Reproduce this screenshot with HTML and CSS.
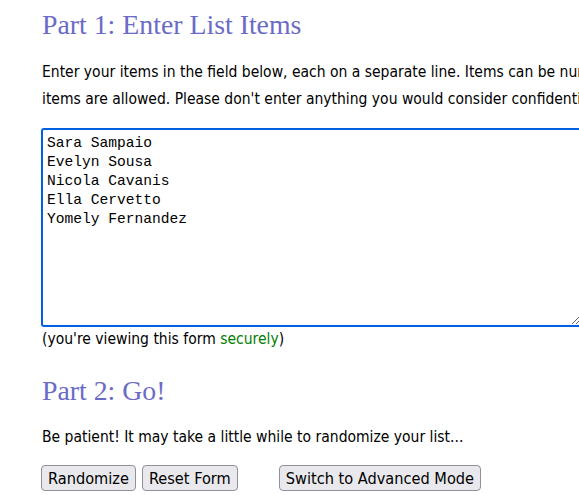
FILE: index.html
```html
<!DOCTYPE html>
<html>
<head>
<meta charset="utf-8">
<link rel="stylesheet" href="styles.css">
</head>
<body>
<div class="page">
  <h2 class="part-title">Part 1: Enter List Items</h2>
  <p class="intro"><span class="line">Enter your items in the field below, each on a separate line. Items can be numbers, names, email addresses, etc. A maximum of 10,000</span><span class="line">items are allowed. Please don't enter anything you would consider confidential.</span></p>
  <textarea class="items" spellcheck="true">Sara Sampaio
Evelyn Sousa
Nicola Cavanis
Ella Cervetto
Yomely Fernandez</textarea>
  <p class="secure">(you're viewing this form <span class="green">securely</span>)</p>
  <h2 class="part-title part2">Part 2: Go!</h2>
  <p class="patient">Be patient! It may take a little while to randomize your list...</p>
  <div class="buttons">
    <button class="btn">Randomize</button>
    <button class="btn">Reset Form</button>
    <button class="btn adv">Switch to Advanced Mode</button>
  </div>
</div>
</body>
</html>
```
FILE: styles.css
```css
html, body {
  margin: 0;
  padding: 0;
  overflow: hidden;
  background: #fff;
}
.page {
  padding-left: 42px;
  width: 1100px;
  font-family: "DejaVu Sans Condensed", "DejaVu Sans", sans-serif;
  font-size: 15.5px;
  color: #000;
}
.part-title {
  font-family: "Liberation Serif", "DejaVu Serif", serif;
  font-weight: normal;
  font-size: 27.8px;
  color: #6b6bc6;
  margin: 0;
  padding-top: 9px;
  line-height: 32px;
}
.intro {
  margin: 18px 0 0 0;
  line-height: 27px;
}
.line {
  display: block;
  white-space: nowrap;
}
.items {
  display: block;
  margin: 15px 0 0 -1px;
  width: 541px;
  height: 199px;
  box-sizing: border-box;
  border: 2px solid #0060df;
  border-radius: 3px;
  outline: none;
  padding: 4px 4px;
  font-family: "Liberation Mono", "DejaVu Sans Mono", monospace;
  font-size: 14.6px;
  line-height: 19px;
  resize: both;
}
.secure {
  margin: 2px 0 0 0;
  line-height: 20px;
}
.green { color: #008000; }
.part2 { padding-top: 26px; }
.patient {
  margin: 20px 0 0 0;
  line-height: 20px;
}
.buttons {
  display: flex;
  margin-top: 18px;
  margin-left: -1px;
  gap: 6px;
}
.btn {
  font-family: "DejaVu Sans Condensed", "DejaVu Sans", sans-serif;
  font-size: 16.2px;
  height: 26px;
  padding: 0 6px;
  background: #e9e9ed;
  border: 1px solid #8f8f9d;
  border-radius: 4px;
  color: #000;
}
.adv { margin-left: 35px; }
```
